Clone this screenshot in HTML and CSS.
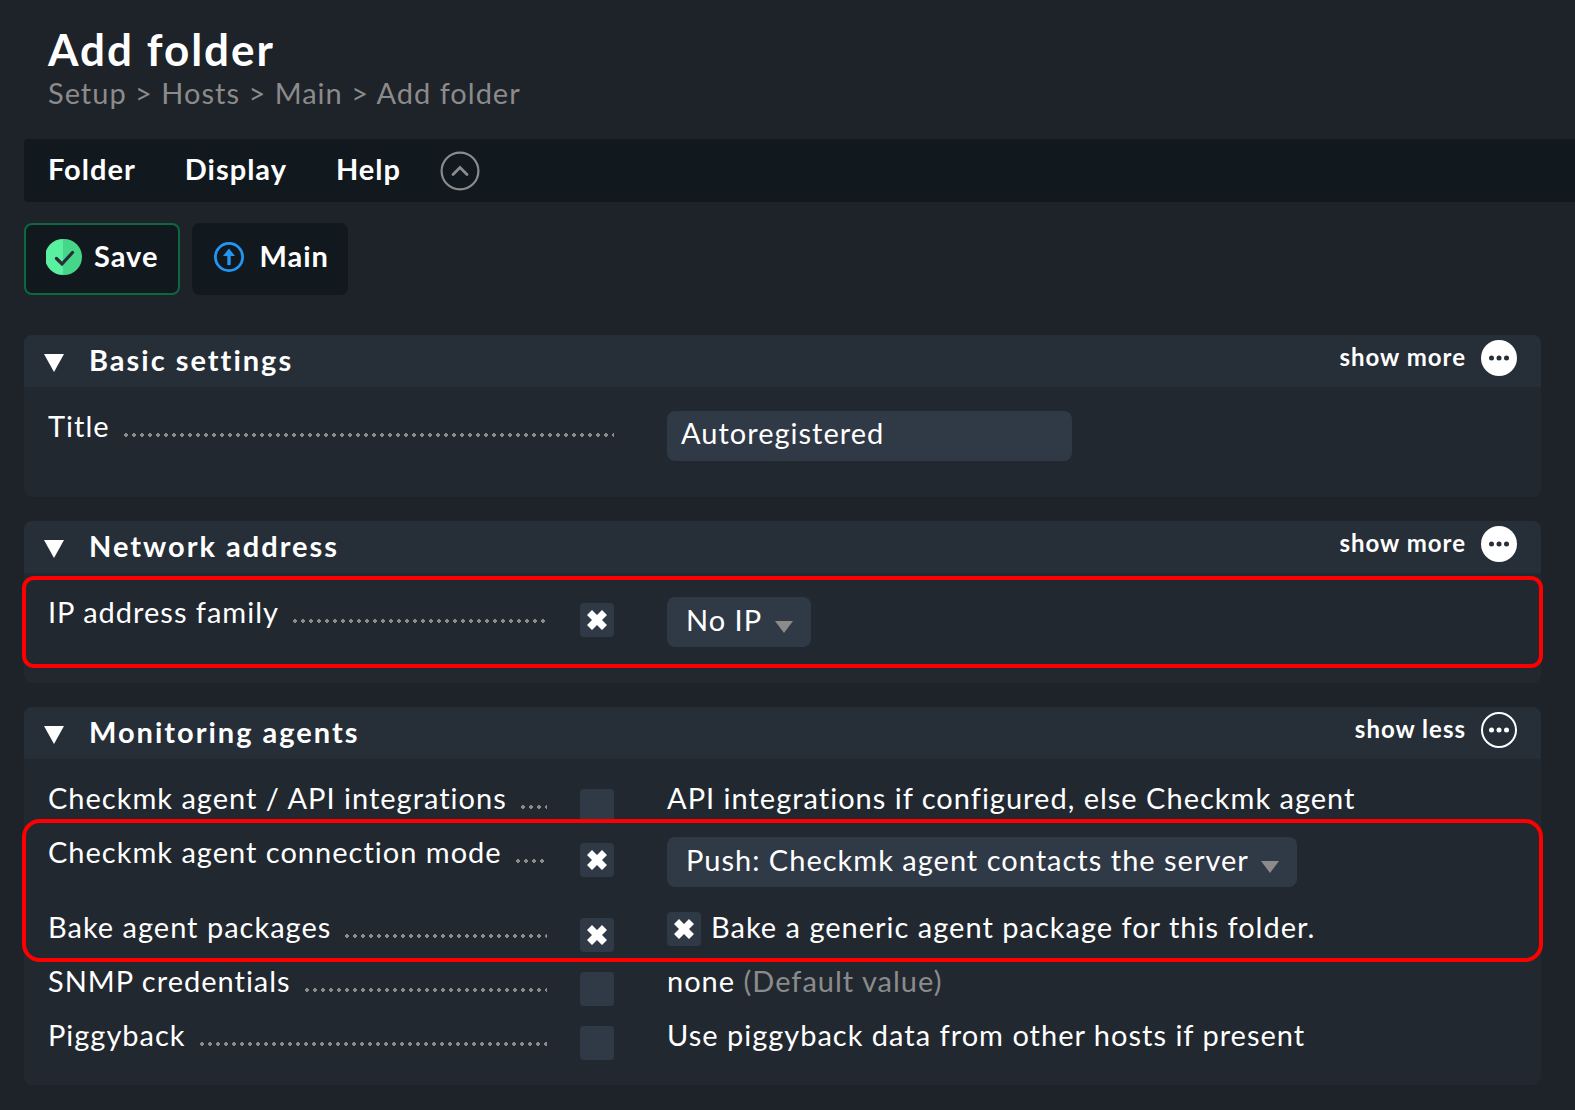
FILE: index.html
```html
<!DOCTYPE html>
<html lang="en">
<head>
<meta charset="utf-8">
<title>Add folder</title>
<link rel="stylesheet" href="styles.css">
</head>
<body>
<header class="page-header">
  <h1>Add folder</h1>
  <nav class="breadcrumb" aria-label="Breadcrumb">
    <a href="#setup">Setup</a> &gt; <a href="#hosts">Hosts</a> &gt; <a href="#main">Main</a> &gt; <a href="#add">Add folder</a>
  </nav>
</header>

<nav class="menu-bar" aria-label="Page menu">
  <button type="button" class="menu-item">Folder</button>
  <button type="button" class="menu-item">Display</button>
  <button type="button" class="menu-item">Help</button>
  <button type="button" class="menu-toggle" aria-label="Hide shortcuts">
    <svg width="40" height="40" viewBox="0 0 40 40" fill="none" stroke="#8b8b8b" stroke-width="2.2">
      <circle cx="20" cy="20" r="18.4"/>
      <path d="M13 23.500l7-7 7 7" stroke-width="2.8" stroke-linecap="round"/>
    </svg>
  </button>
</nav>

<div class="shortcuts">
  <button type="submit" form="folder-form" class="shortcut shortcut-save">
    <svg width="36" height="36" viewBox="0 0 36 36">
      <path d="M17 0a18 18 0 1 0 0 36z" fill="#5bf0a0"/>
      <path d="M17 0h1a18 18 0 0 1 0 36h-1z" fill="#46d68a"/>
      <path d="M10.500 19.500l5.500 5.500 10.500-11.500" fill="none" stroke="#262e38" stroke-width="3.200" stroke-linecap="round"/>
    </svg>
    <span>Save</span>
  </button>
  <button type="button" class="shortcut shortcut-main">
    <svg width="30" height="30" viewBox="0 0 30 30">
      <circle cx="15" cy="15" r="13.600" fill="none" stroke="#2196f3" stroke-width="2.800"/>
      <path d="M15 6.500l6 7.500h-4.300v9h-3.400v-9H9z" fill="#2196f3"/>
    </svg>
    <span>Main</span>
  </button>
</div>

<form id="folder-form" class="sections">
  <section class="panel">
    <header class="panel-header">
      <h2><span class="caret"></span>Basic settings</h2>
      <button type="button" class="more"><span>show more</span>
        <svg width="36" height="36" viewBox="0 0 36 36"><circle cx="18" cy="18" r="18" fill="#fff"/><g fill="#262e38"><circle cx="10.500" cy="18" r="2.500"/><circle cx="18" cy="18" r="2.500"/><circle cx="25.500" cy="18" r="2.500"/></g></svg>
      </button>
    </header>
    <div class="panel-body">
      <div class="row tall">
        <div class="legend"><label for="title">Title</label><span class="dots"></span></div>
        <div class="value"><input id="title" class="text-input" type="text" value="Autoregistered"></div>
      </div>
    </div>
  </section>

  <section class="panel">
    <header class="panel-header">
      <h2><span class="caret"></span>Network address</h2>
      <button type="button" class="more"><span>show more</span>
        <svg width="36" height="36" viewBox="0 0 36 36"><circle cx="18" cy="18" r="18" fill="#fff"/><g fill="#262e38"><circle cx="10.500" cy="18" r="2.500"/><circle cx="18" cy="18" r="2.500"/><circle cx="25.500" cy="18" r="2.500"/></g></svg>
      </button>
    </header>
    <div class="panel-body">
      <div class="marked marked-single">
        <div class="row tall">
          <div class="legend"><label for="use-ip">IP address family</label><span class="dots"></span><input id="use-ip" class="check" type="checkbox" checked></div>
          <div class="value"><span class="drop"><select aria-label="IP address family"><option>No IP</option></select></span></div>
        </div>
      </div>
    </div>
  </section>

  <section class="panel">
    <header class="panel-header">
      <h2><span class="caret"></span>Monitoring agents</h2>
      <button type="button" class="more"><span>show less</span>
        <svg width="36" height="36" viewBox="0 0 36 36"><circle cx="18" cy="18" r="17" fill="none" stroke="#fff" stroke-width="2"/><g fill="#fff"><circle cx="10.500" cy="18" r="2.500"/><circle cx="18" cy="18" r="2.500"/><circle cx="25.500" cy="18" r="2.500"/></g></svg>
      </button>
    </header>
    <div class="panel-body">
      <div class="row">
        <div class="legend"><label for="use-agent">Checkmk agent / API integrations</label><span class="dots"></span><input id="use-agent" class="check" type="checkbox"></div>
        <div class="value">API integrations if configured, else Checkmk agent</div>
      </div>
      <div class="marked">
        <div class="row tall">
          <div class="legend"><label for="use-mode">Checkmk agent connection mode</label><span class="dots"></span><input id="use-mode" class="check" type="checkbox" checked></div>
          <div class="value"><span class="drop"><select aria-label="Checkmk agent connection mode"><option>Push: Checkmk agent contacts the server</option></select></span></div>
        </div>
        <div class="row">
          <div class="legend"><label for="use-bake">Bake agent packages</label><span class="dots"></span><input id="use-bake" class="check" type="checkbox" checked></div>
          <div class="value inline-check"><input id="bake" class="check" type="checkbox" checked><label for="bake">Bake a generic agent package for this folder.</label></div>
        </div>
      </div>
      <div class="row">
        <div class="legend"><label for="use-snmp">SNMP credentials</label><span class="dots"></span><input id="use-snmp" class="check" type="checkbox"></div>
        <div class="value">none <span class="muted">(Default value)</span></div>
      </div>
      <div class="row">
        <div class="legend"><label for="use-piggyback">Piggyback</label><span class="dots"></span><input id="use-piggyback" class="check" type="checkbox"></div>
        <div class="value">Use piggyback data from other hosts if present</div>
      </div>
    </div>
  </section>
</form>
</body>
</html>
```
FILE: styles.css
```css
* {
  box-sizing: border-box;
}

body {
  margin: 0;
  padding: 28px 0 24px 24px;
  background: #1e2229;
  color: #fff;
  font: 29px/30px Lato, "Noto Sans", sans-serif;
  letter-spacing: 1px;
}

button,
input,
select {
  margin: 0;
  padding: 0;
  border: 0;
  background: none;
  color: inherit;
  font: inherit;
  letter-spacing: inherit;
}

button {
  display: flex;
  align-items: center;
  font-weight: 700;
  cursor: pointer;
}

svg {
  display: block;
  flex: none;
}

.page-header {
  padding: 0 24px;
}

h1 {
  margin: 0;
  font-size: 44px;
  line-height: 42px;
  font-weight: 700;
  letter-spacing: 2px;
}

.breadcrumb {
  margin-top: 8px;
  color: #8b8b8b;
}

.breadcrumb a {
  color: inherit;
  text-decoration: none;
}

.menu-bar {
  display: flex;
  align-items: center;
  gap: 49px;
  height: 63px;
  margin-top: 31px;
  padding: 0 24px;
  border-radius: 4px 0 0 4px;
  background: #11181e;
}

.menu-item {
  padding-bottom: 4px;
}

.menu-toggle {
  margin-left: -10px;
}

.shortcuts {
  display: flex;
  gap: 12px;
  margin-top: 21px;
}

.shortcut {
  height: 72px;
  padding: 0 20px 4px;
  border: 2px solid #11181e;
  border-radius: 8px;
  background: #11181e;
}

.shortcut span {
  padding-bottom: 2px;
}

.shortcut-save {
  gap: 12px;
  border-color: #0b6840;
}

.shortcut-main {
  gap: 15px;
  padding-right: 17px;
}

.sections {
  display: grid;
  gap: 24px;
  margin: 40px 34px 0 0;
}

.panel {
  border-radius: 8px;
  background: #212830;
}

.panel-header {
  display: flex;
  justify-content: space-between;
  align-items: flex-start;
  height: 52px;
  padding: 5px 24px 0 20px;
  border-radius: 8px 8px 0 0;
  background: #262e38;
}

h2 {
  display: flex;
  align-items: center;
  gap: 25px;
  margin: 5px 0 0;
  font-size: 29px;
  line-height: 30px;
  font-weight: 700;
  letter-spacing: 2px;
}

.caret {
  width: 20px;
  height: 18px;
  margin-top: 6px;
  background: #fff;
  clip-path: polygon(0 0, 100% 0, 50% 100%);
}

.more {
  gap: 15px;
  font-size: 24px;
}

.more span {
  padding-bottom: 2px;
}

.panel-body {
  padding: 24px 24px 11px;
}

.row {
  display: grid;
  grid-template-columns: 566px 1fr;
  column-gap: 53px;
  min-height: 54px;
}

.row.tall {
  min-height: 75px;
}

.legend {
  display: flex;
  align-items: flex-start;
}

.dots {
  flex: 1;
  height: 4px;
  margin: 22px 0 0 14px;
  background: radial-gradient(circle at 2px 2px, #8b8b8b 2px, transparent 2px) 0 0 / 8px 4px;
}

.check {
  display: grid;
  place-items: center;
  flex: none;
  appearance: none;
  width: 34px;
  height: 34px;
  border-radius: 4px;
  background: #303946;
}

.legend .check {
  margin: 6px 0 0 33px;
}

.check:checked::before {
  content: "";
  width: 20px;
  height: 20px;
  background: #fff;
  clip-path: polygon(25% 0, 50% 25%, 75% 0, 100% 25%, 75% 50%, 100% 75%, 75% 100%, 50% 75%, 25% 100%, 0 75%, 25% 50%, 0 25%);
}

.text-input {
  width: 405px;
  height: 50px;
  padding: 0 14px 8px;
  border-radius: 8px;
  background: #303946;
}

.drop {
  display: inline-grid;
  align-items: center;
}

.drop select,
.drop::after {
  grid-area: 1 / 1;
}

.drop select {
  appearance: none;
  height: 50px;
  padding: 0 48px 5px 19px;
  border-radius: 8px;
  background: #303946;
  line-height: 40px;
}

.drop::after {
  content: "";
  justify-self: end;
  width: 18px;
  height: 12px;
  margin: 10px 18px 0 0;
  background: #8b8b8b;
  clip-path: polygon(0 0, 100% 0, 50% 100%);
  pointer-events: none;
}

.inline-check {
  display: flex;
  gap: 10px;
}

.muted {
  color: #8b8b8b;
}

.marked {
  position: relative;
}

.marked::after {
  content: "";
  position: absolute;
  inset: -18px -26px 4px;
  border: 4px solid #f00;
  border-radius: 18px;
  pointer-events: none;
}

.marked-single::after {
  top: -21px;
  border-radius: 12px;
}
```
